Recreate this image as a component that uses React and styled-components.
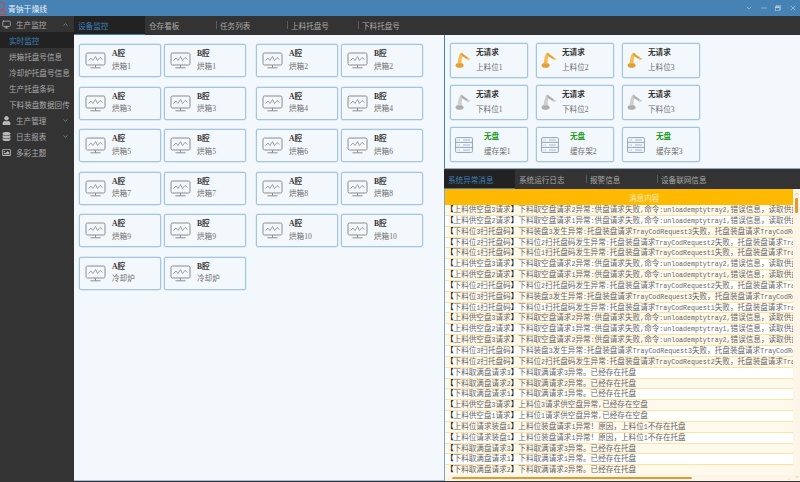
import React from "react";
import styled, { createGlobalStyle } from "styled-components";
import { FiMonitor, FiChevronDown, FiChevronUp, FiMinus, FiX } from "react-icons/fi";
import { FaUser, FaDatabase, FaRegImage, FaRegWindowRestore } from "react-icons/fa";

const Global = createGlobalStyle`
  html, body { margin: 0; padding: 0; background: #333; }
  * { box-sizing: border-box; }
  #root { width: 800px; height: 482px; overflow: hidden; }
`;

const FONT = `"Liberation Serif", "Noto Sans CJK SC", sans-serif`;

const Page = styled.div`
  width: 800px;
  height: 482px;
  display: flex;
  flex-direction: column;
  font-family: ${FONT};
  font-size: 7.6px;
  background: #333;
  overflow: hidden;
`;

const TitleBar = styled.div`
  height: 16px;
  flex: none;
  display: flex;
  align-items: center;
  background: #4682b4;
  color: #e8f0f6;
`;

const TitleText = styled.div`
  font-size: 7.8px;
  margin-left: 1px;
  flex: 1;
`;

const WinBtn = styled.div`
  width: 14.5px;
  display: flex;
  justify-content: center;
  color: #b7cfe3;
  font-size: 8px;
`;

const Body = styled.div`
  flex: 1;
  display: flex;
  min-height: 0;
`;

const Sidebar = styled.div`
  width: 74px;
  flex: none;
  background: #333;
`;

const NavHead = styled.div`
  height: 16.2px;
  display: flex;
  align-items: center;
  color: #a8a8a8;
  padding: 0 5px 0 2px;
  svg:first-child { width: 9px; font-size: 9px; color: #b8b8b8; }
`;

const NavHeadText = styled.span`
  margin-left: 5px;
  flex: 1;
`;

const NavItem = styled.div`
  height: 16px;
  display: flex;
  align-items: center;
  padding-left: 9px;
  white-space: nowrap;
  color: ${(p) => (p.active ? "#3f7fb5" : "#a8a8a8")};
  background: ${(p) => (p.active ? "#222" : "transparent")};
`;

const Main = styled.div`
  flex: 1;
  display: flex;
  flex-direction: column;
  min-width: 0;
`;

const TabBar = styled.div`
  height: 19px;
  flex: none;
  display: flex;
  background: #333;
`;

const Tab = styled.div`
  width: 71px;
  display: flex;
  align-items: center;
  padding-left: 4px;
  position: relative;
  color: ${(p) => (p.active ? "#3f7fb5" : "#a8a8a8")};
  background: ${(p) => (p.active ? "#222" : "transparent")};
  border-bottom: 1.5px solid ${(p) => (p.active ? "#3f7fb5" : "transparent")};
  &::before {
    content: "";
    display: ${(p) => (p.sep ? "block" : "none")};
    position: absolute;
    left: 0;
    top: 5px;
    bottom: 5px;
    width: 1px;
    background: #5c5c5c;
  }
`;

const Panes = styled.div`
  flex: 1;
  display: flex;
  min-height: 0;
  margin-bottom: 1px;
`;

const LeftPane = styled.div`
  width: 370px;
  flex: none;
  background: #f3f8fc;
  border-bottom: 1px solid #a8bdd4;
  padding: 9px 0 0 5px;
  display: grid;
  grid-template-columns: 82px 82px 4px 82px 82px;
  grid-auto-rows: 33px;
  column-gap: 3px;
  row-gap: 9.5px;
  align-content: start;
`;

const Card = styled.div`
  display: flex;
  align-items: center;
  background: #f3f8fc;
  border: 1px solid #a3c5e2;
  border-radius: 2px;
  padding-left: ${(p) => p.pad || 5}px;
  box-shadow: 0 0 0 0.4px #c6dcee;
  ${(p) => p.grid && `&:nth-child(4n + 3) { grid-column: 4; }`}
`;

const CardText = styled.div`
  margin-left: ${(p) => p.gap || 6}px;
  display: flex;
  flex-direction: column;
  row-gap: ${(p) => p.rowGap || 2.5}px;
  line-height: 10px;
`;

const CardTitle = styled.div`
  font-weight: 700;
  color: ${(p) => p.color || "#333"};
`;

const CardSub = styled.div`
  color: #6e6e6e;
`;

const RightPane = styled.div`
  flex: 1;
  display: flex;
  flex-direction: column;
  min-width: 0;
  background: #333;
`;

const StationPanel = styled.div`
  height: 134px;
  flex: none;
  background: #f3f8fc;
  border-left: 1px solid #4682b4;
  border-bottom: 1px solid #8fa9c4;
  padding: 8px 0 0 5px;
  display: grid;
  grid-template-columns: repeat(3, 78px);
  grid-auto-rows: 34.5px;
  column-gap: 8px;
  row-gap: 7.7px;
`;

const Gap = styled.div`
  height: 1px;
  flex: none;
`;

const LogArea = styled.div`
  flex: 1;
  min-height: 0;
  display: flex;
  background: #fdf6e8;
  border-left: 1px solid #7fa3c4;
`;

const LogMain = styled.div`
  flex: 1;
  min-width: 0;
  display: flex;
  flex-direction: column;
`;

const LogHead = styled.div`
  height: 16px;
  flex: none;
  display: flex;
  align-items: center;
  padding-left: 184px;
  background: #ffb900;
  color: #ffeec4;
`;

const LogRows = styled.div`
  flex: 1;
  min-height: 0;
  overflow: hidden;
`;

const LogRow = styled.div`
  height: 10.85px;
  line-height: 9.85px;
  padding-left: 1px;
  white-space: nowrap;
  overflow: hidden;
  color: #666;
  background: ${(p) => (p.odd ? "#ffffff" : "#fff9ec")};
  border-bottom: 1px solid #ffe2a0;
`;

const Bracket = styled.span`
  color: #222;
  font-weight: 700;
`;

const Latin = styled.span`
  font-family: "Liberation Mono", monospace;
  font-size: 6.6px;
`;

const HBar = styled.div`
  height: 6px;
  flex: none;
  display: flex;
  align-items: center;
  padding: 0 3px;
  background: #fdf6e8;
  color: #e6a445;
  font-size: 5px;
`;

const HTrack = styled.div`
  flex: 1;
  padding: 0 2px;
`;

const HThumb = styled.div`
  width: 240px;
  height: 2.5px;
  background: #e09a30;
  border-radius: 1px;
`;

const VBar = styled.div`
  width: 7px;
  flex: none;
  display: flex;
  flex-direction: column;
  align-items: center;
  justify-content: space-between;
  padding: 2px 0 1px;
  background: #fdf6e8;
  color: #e6a445;
  font-size: 5px;
`;

const VTrack = styled.div`
  flex: 1;
  width: 3px;
  padding-top: 1px;
`;

const VThumb = styled.div`
  height: 15px;
  background: #e09a30;
  border-radius: 1px;
`;

const MonitorIcon = () => (
  <svg width="21" height="17" viewBox="0 0 21 17" fill="none" stroke="#8c8c8c">
    <rect x="1" y="1" width="19" height="12" rx="1.5" strokeWidth="1" />
    <path d="M3.5 8.5 L6 6 L8 8.5 L10.5 4.5 L12.5 8.5 L15 5.5 L17.5 7.5" strokeWidth="0.8" />
    <path d="M10.5 13 V15.5 M5.5 15.8 H15.5" strokeWidth="1" />
  </svg>
);

const RobotIcon = ({ main, dark }) => (
  <svg width="16" height="16" viewBox="0 0 16 16">
    <path d="M0.6 13.4 C0.6 11.6 2.4 10.8 4.6 10.8 C6.8 10.8 8.6 11.6 8.6 13.4 C8.6 15 6.8 15.8 4.6 15.8 C2.4 15.8 0.6 15 0.6 13.4 Z" fill={dark} />
    <path d="M2.6 11.6 C3 8 3.6 4.4 5 1.6 C5.6 0.6 7 0.4 7.8 1.2 C8.6 2 8.4 3 7.6 3.8 C6.8 6 6.6 8.6 6.6 11.6 Z" fill={main} />
    <path d="M6.4 0.8 L13 5.4 L12 7.2 L6.6 3.8 Z" fill={dark} />
    <path d="M11.8 5 L15.6 6.8 L12.6 8.6 Z" fill={main} />
  </svg>
);

const RackIcon = () => (
  <svg width="18" height="16" viewBox="0 0 18 16" fill="none" stroke="#8ea3ba">
    <rect x="0.6" y="0.6" width="16.8" height="14.8" rx="1" strokeWidth="1" />
    <path d="M0.6 5.4 H17.4 M0.6 10.4 H17.4" strokeWidth="1" />
    <path d="M8 3 H15 M8 8 H15 M8 13 H15" strokeWidth="0.8" />
    <path d="M2.5 3 H5 M2.5 8 H5 M2.5 13 H5" strokeWidth="0.8" strokeDasharray="1 0.6" />
  </svg>
);

const LogoIcon = () => (
  <svg width="7" height="14" viewBox="0 0 7 14" fill="none" stroke="#d8403a" strokeWidth="1">
    <circle cx="0.5" cy="5" r="4" />
    <path d="M0 10 L5 10 L6 13.5 L0 13.5" />
  </svg>
);

const ovenCards = [];
for (let i = 1; i <= 10; i += 2) {
  ovenCards.push(
    ["A腔", `烘箱${i}`], ["B腔", `烘箱${i}`],
    ["A腔", `烘箱${i + 1}`], ["B腔", `烘箱${i + 1}`]
  );
}
ovenCards.push(["A腔", "冷却炉"], ["B腔", "冷却炉"]);

const supply = (from, n, tray) =>
  `【上料供空盘${from}请求】下料取空盘请求${n}异常:供盘请求失败,命令:unloademptytray${tray},错误信息，读取供盘`;
const place3 = "【下料位3扫托盘码】下料装盘3发生异常:托盘装盘请求TrayCodRequest3失败，托盘装盘请求TrayCodRequest3";
const scan = (n) =>
  `【下料位${n}扫托盘码】下料位${n}扫托盘码发生异常:托盘装盘请求TrayCodRequest${n}失败，托盘装盘请求TrayCod`;
const full = (n) => `【下料取满盘请求${n}】下料取满请求${n}异常。已经存在托盘`;
const empty = (n) => `【上料供空盘${n}请求】上料位${n}请求供空盘异常,已经存在空盘`;
const load = "【上料位请求装盘1】上料位装盘请求1异常！原因，上料位1不存在托盘";

const messages = [
  supply(3, 2, 2), supply(2, 1, 1), place3, scan(2), scan(1),
  supply(3, 2, 2), supply(2, 1, 1), scan(2), place3, scan(1),
  supply(3, 2, 2), supply(2, 1, 1), supply(3, 2, 2), place3, scan(2),
  full(3), full(2), full(1), empty(3), empty(1),
  load, load, full(3), full(1), full(2),
];

// 半角字符用等宽字体，方括号加粗
const renderText = (text) =>
  text.split(/([\x21-\x7e]+|[【】])/).map((part, i) => {
    if (part === "【" || part === "】") return <Bracket key={i}>{part}</Bracket>;
    return /^[\x21-\x7e]+$/.test(part) ? <Latin key={i}>{part}</Latin> : part;
  });

const App = () => (
  <Page>
    <Global />
    <TitleBar>
      <LogoIcon />
      <TitleText>青钠干燥线</TitleText>
      <WinBtn><FiChevronDown /></WinBtn>
      <WinBtn><FiMinus /></WinBtn>
      <WinBtn><FaRegWindowRestore size={6} /></WinBtn>
      <WinBtn><FiX /></WinBtn>
    </TitleBar>
    <Body>
      <Sidebar>
        <NavHead>
          <FiMonitor />
          <NavHeadText>生产监控</NavHeadText>
          <FiChevronUp size={7} />
        </NavHead>
        <NavItem active>实时监控</NavItem>
        <NavItem>烘箱托盘号信息</NavItem>
        <NavItem>冷却炉托盘号信息</NavItem>
        <NavItem>生产托盘条码</NavItem>
        <NavItem>下料装盘数据回传</NavItem>
        <NavHead>
          <FaUser />
          <NavHeadText>生产管理</NavHeadText>
          <FiChevronDown size={7} />
        </NavHead>
        <NavHead>
          <FaDatabase />
          <NavHeadText>日志报表</NavHeadText>
          <FiChevronDown size={7} />
        </NavHead>
        <NavHead>
          <FaRegImage />
          <NavHeadText>多彩主题</NavHeadText>
        </NavHead>
      </Sidebar>
      <Main>
        <TabBar>
          <Tab active>设备监控</Tab>
          <Tab>仓存看板</Tab>
          <Tab sep>任务列表</Tab>
          <Tab sep>上料托盘号</Tab>
          <Tab sep>下料托盘号</Tab>
        </TabBar>
        <Panes>
          <LeftPane>
            {ovenCards.map(([title, sub], i) => (
              <Card grid key={i}>
                <MonitorIcon />
                <CardText gap={6}>
                  <CardTitle>{title}</CardTitle>
                  <CardSub>{sub}</CardSub>
                </CardText>
              </Card>
            ))}
          </LeftPane>
          <RightPane>
            <StationPanel>
              {[1, 2, 3].map((n) => (
                <Card key={`up${n}`} pad={4}>
                  <RobotIcon main="#f4bd55" dark="#e0a035" />
                  <CardText gap={5} rowGap={5}>
                    <CardTitle>无请求</CardTitle>
                    <CardSub>上料位{n}</CardSub>
                  </CardText>
                </Card>
              ))}
              {[1, 2, 3].map((n) => (
                <Card key={`down${n}`} pad={4}>
                  <RobotIcon main="#cfcfcf" dark="#adadad" />
                  <CardText gap={5} rowGap={5}>
                    <CardTitle>无请求</CardTitle>
                    <CardSub>下料位{n}</CardSub>
                  </CardText>
                </Card>
              ))}
              {[1, 2, 3].map((n) => (
                <Card key={`rack${n}`} pad={4}>
                  <RackIcon />
                  <CardText gap={11} rowGap={5}>
                    <CardTitle color="#1d9a1d">无盘</CardTitle>
                    <CardSub>缓存架{n}</CardSub>
                  </CardText>
                </Card>
              ))}
            </StationPanel>
            <Gap />
            <TabBar>
              <Tab active>系统异常消息</Tab>
              <Tab>系统运行日志</Tab>
              <Tab sep>报警信息</Tab>
              <Tab sep>设备联网信息</Tab>
            </TabBar>
            <LogArea>
              <LogMain>
                <LogHead>消息内容</LogHead>
                <LogRows>
                  {messages.map((m, i) => (
                    <LogRow key={i} odd={i % 2 === 1}>{renderText(m)}</LogRow>
                  ))}
                </LogRows>
                <HBar>
                  ‹
                  <HTrack><HThumb /></HTrack>
                  ›
                </HBar>
              </LogMain>
              <VBar>
                <FiChevronUp size={6} />
                <VTrack><VThumb /></VTrack>
                <FiChevronDown size={6} />
              </VBar>
            </LogArea>
          </RightPane>
        </Panes>
      </Main>
    </Body>
  </Page>
);

export default App;
